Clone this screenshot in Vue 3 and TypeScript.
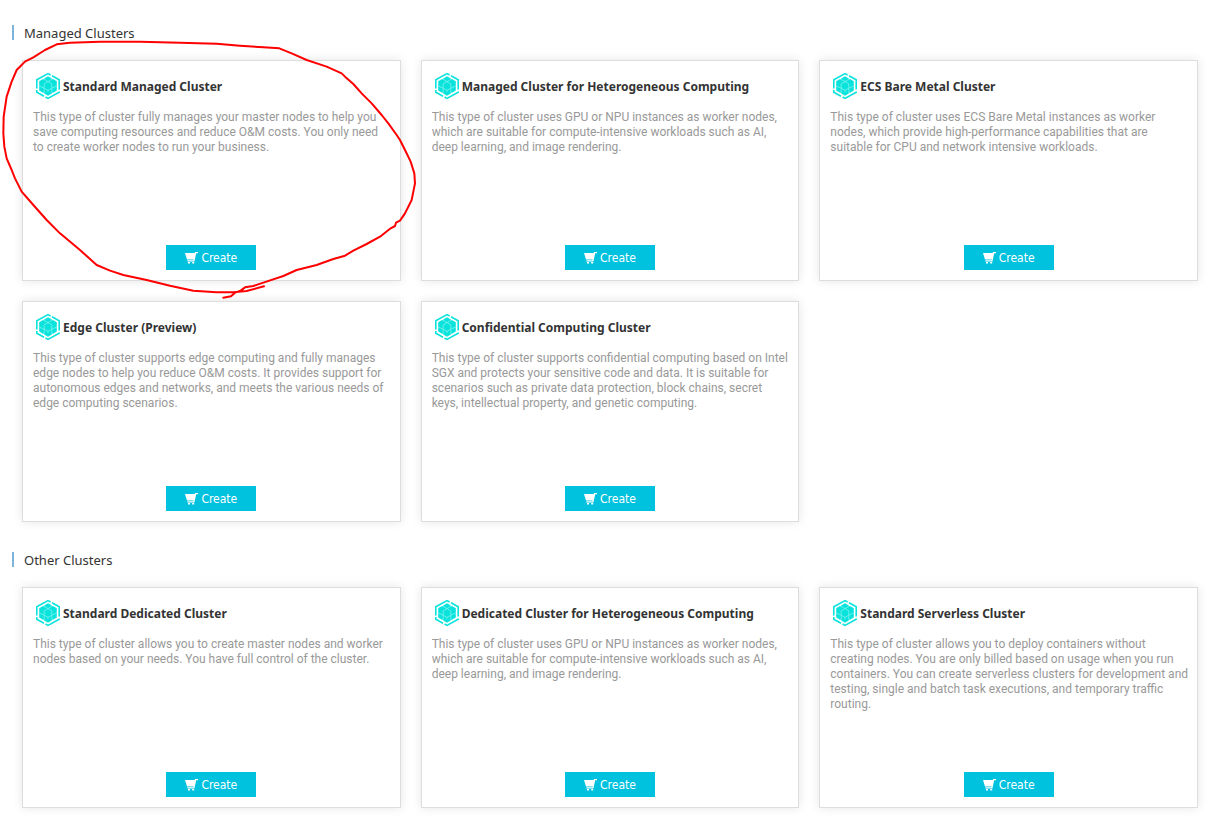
<script setup lang="ts">
interface Cluster {
  name: string
  description: string
}

interface ClusterGroup {
  id: string
  title: string
  clusters: Cluster[]
}

const groups: ClusterGroup[] = [
  {
    id: 'managed',
    title: 'Managed Clusters',
    clusters: [
      {
        name: 'Standard Managed Cluster',
        description:
          'This type of cluster fully manages your master nodes to help you\nsave computing resources and reduce O&M costs. You only need\nto create worker nodes to run your business.',
      },
      {
        name: 'Managed Cluster for Heterogeneous Computing',
        description:
          'This type of cluster uses GPU or NPU instances as worker nodes,\nwhich are suitable for compute-intensive workloads such as AI,\ndeep learning, and image rendering.',
      },
      {
        name: 'ECS Bare Metal Cluster',
        description:
          'This type of cluster uses ECS Bare Metal instances as worker\nnodes, which provide high-performance capabilities that are\nsuitable for CPU and network intensive workloads.',
      },
      {
        name: 'Edge Cluster (Preview)',
        description:
          'This type of cluster supports edge computing and fully manages\nedge nodes to help you reduce O&M costs. It provides support for\nautonomous edges and networks, and meets the various needs of\nedge computing scenarios.',
      },
      {
        name: 'Confidential Computing Cluster',
        description:
          'This type of cluster supports confidential computing based on Intel\nSGX and protects your sensitive code and data. It is suitable for\nscenarios such as private data protection, block chains, secret\nkeys, intellectual property, and genetic computing.',
      },
    ],
  },
  {
    id: 'other',
    title: 'Other Clusters',
    clusters: [
      {
        name: 'Standard Dedicated Cluster',
        description:
          'This type of cluster allows you to create master nodes and worker\nnodes based on your needs. You have full control of the cluster.',
      },
      {
        name: 'Dedicated Cluster for Heterogeneous Computing',
        description:
          'This type of cluster uses GPU or NPU instances as worker nodes,\nwhich are suitable for compute-intensive workloads such as AI,\ndeep learning, and image rendering.',
      },
      {
        name: 'Standard Serverless Cluster',
        description:
          'This type of cluster allows you to deploy containers without\ncreating nodes. You are only billed based on usage when you run\ncontainers. You can create serverless clusters for development and\ntesting, single and batch task executions, and temporary traffic\nrouting.',
      },
    ],
  },
]
</script>

<template>
  <main class="page">
    <section v-for="group in groups" :key="group.id" class="group" :aria-labelledby="group.id">
      <h2 :id="group.id" class="group-title">{{ group.title }}</h2>
      <div class="grid">
        <article v-for="cluster in group.clusters" :key="cluster.name" class="card">
          <header class="card-head">
            <svg class="logo" viewBox="0 0 30 30" aria-hidden="true">
              <g fill="none" stroke="#0ae3dc" stroke-width="1.6">
                <path d="M3.8 17.5V8.8L15 2.6L17.6 4" />
                <path d="M19 4.8L26.2 8.8V18.5" />
                <path d="M26.2 20.5V21.2L15 27.4L12.5 26" />
                <path d="M11 25.2L3.8 21.2V19" />
              </g>
              <path
                d="M15 5.2L18.8 7.4V8.4L20 8L23.8 10.2V19.6L20 21.8L18.8 21.4V22.6L15 24.8L11.2 22.6V21.4L10 21.8L6.2 19.6V10.2L10 8L11.2 8.4V7.4Z"
                fill="#0ae3dc"
              />
              <g fill="none" stroke="#8af3ef" stroke-width="0.7">
                <path d="M15 10.6L18.8 12.8V17.2L15 19.4L11.2 17.2V12.8Z" />
                <path d="M11.2 8.4L15 10.6L18.8 8.4M11.2 21.4V17.2L6.2 15M18.8 21.4V17.2L23.8 15M15 19.4V21" />
              </g>
            </svg>
            <h3 class="card-title">{{ cluster.name }}</h3>
          </header>
          <p class="card-text">{{ cluster.description }}</p>
          <button type="button" class="create">
            <svg class="cart" viewBox="0 0 13 12" aria-hidden="true">
              <path
                d="M0 1H9.6L10.1 0H13V1.2H11.2L9.4 9.4H2.4V8.2H8.4L8.6 7.4H2Z M3 10H5V11.6H3Z M7.2 10H9.2V11.6H7.2Z"
                fill="#fff"
              />
            </svg>
            <span>Create</span>
          </button>
        </article>
      </div>
    </section>

    <svg class="marker" viewBox="0 0 1290 870" aria-hidden="true">
      <path
        d="M670 833L693 829L705 818L722 812L735 802L760 798L790 788L850 768L890 750L950 735L1000 717L1035 707L1060 692L1100 672L1140 650L1172 625L1185 618L1188 608L1200 602L1215 580L1235 540L1245 490L1243 460L1232 425L1215 390L1200 360L1190 345L1165 310L1145 285L1115 250L1085 220L1060 192L1035 170L1025 160L980 140L920 120L875 100L838 85L790 82L720 77L650 71L540 68L420 65L300 65L210 68L170 73L135 90L100 112L75 125L50 150L35 185L20 230L11 290L10 340L13 380L20 415L35 450L45 475L65 515L100 555L140 600L180 640L240 690L290 735L330 752L370 765L440 780L510 797L580 812L650 817L700 817L740 813L792 799"
      />
    </svg>
  </main>
</template>

<style scoped>
.page {
  position: relative;
  padding: 25px 31px 32px 12px;
  background: #fff;
  font-family: Tahoma, "DejaVu Sans Condensed", sans-serif;
  color: #333;
}

.group + .group {
  margin-top: 30px;
}

.group-title {
  margin: 0 0 20px;
  padding: 1px 0 0 10px;
  border-left: 2px solid #7cb4dc;
  font-family: Tahoma, "Noto Sans", sans-serif;
  font-size: 13px;
  font-weight: 400;
  line-height: 14px;
}

.grid {
  display: grid;
  grid-template-columns: repeat(3, minmax(0, 1fr));
  gap: 20px;
  margin-left: 10px;
}

.card {
  display: flex;
  flex-direction: column;
  box-sizing: border-box;
  min-height: 221px;
  padding: 10px;
  border: 1px solid #ddd;
  background: #fff;
  box-shadow: 0 0 10px rgba(0, 0, 0, 0.1);
}

.card-head {
  display: flex;
  align-items: center;
}

.logo {
  flex: none;
  width: 30px;
  height: 30px;
}

.card-title {
  margin: 0;
  padding-top: 2px;
  font-family: Tahoma, "Noto Sans", sans-serif;
  font-size: 12px;
  font-weight: 700;
  line-height: 16px;
}

.card-text {
  margin: 9px -6px 10px 0;
  font-family: Tahoma, Roboto, sans-serif;
  font-size: 12px;
  line-height: 15px;
  color: #999;
  white-space: pre-line;
}

.create {
  display: flex;
  align-items: center;
  justify-content: center;
  gap: 3px;
  align-self: center;
  width: 90px;
  height: 25px;
  margin-top: auto;
  padding: 0;
  border: 0;
  background: #00c1de;
  font-family: inherit;
  font-size: 12px;
  line-height: 16px;
  color: #fff;
  cursor: pointer;
}

.cart {
  width: 13px;
  height: 12px;
}

.marker {
  position: absolute;
  top: 20px;
  left: 0;
  width: 430px;
  height: 290px;
  pointer-events: none;
}

.marker path {
  fill: none;
  stroke: #f00;
  stroke-width: 6;
  stroke-linecap: round;
  stroke-linejoin: round;
}
</style>

<style>
body {
  margin: 0;
  background: #fff;
}
</style>
